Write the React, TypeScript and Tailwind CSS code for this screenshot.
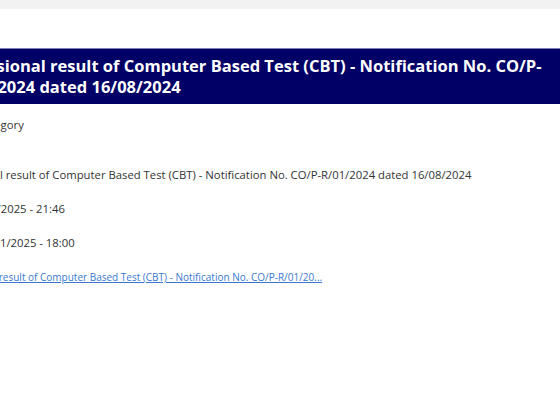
const font = { fontFamily: '"Open Sans", "Noto Sans", sans-serif' };

const NoticePage = () => {
  return (
    <div className="w-[560px] h-[404px] bg-white overflow-hidden" style={font}>
      <div className="h-[9px] bg-[#f2f2f2]" />

      <div className="-ml-[57px] mt-[39px]">
        <h1 className="bg-[#000066] border-t border-[#7f7fb3] pl-[11px] pr-[8px] pt-[6px] pb-[7px] text-white font-bold text-[16.5px] leading-[21px]">
          Provisional result of Computer Based Test (CBT) - Notification No. CO/P-R/01/2024 dated 16/08/2024
        </h1>

        <div className="text-[11.3px] leading-[20px] text-[#333] pl-[2px]">
          <p className="mt-[11px]">Exam Category</p>
          <p className="mt-[30px]">
            Provisional result of Computer Based Test (CBT) - Notification No. CO/P-R/01/2024 dated 16/08/2024
          </p>
          <p className="mt-[14px]">On: 12/02/2025 - 21:46</p>
          <p className="mt-[14px]">Ends: 28/01/2025 - 18:00</p>
          <p className="mt-[14px] text-[10px]">
            <a href="#" className="text-[#3a78d0] underline">
              Provisional result of Computer Based Test (CBT) - Notification No. CO/P-R/01/20...
            </a>
          </p>
        </div>
      </div>
    </div>
  );
};

export default function App() {
  return <NoticePage />;
}
